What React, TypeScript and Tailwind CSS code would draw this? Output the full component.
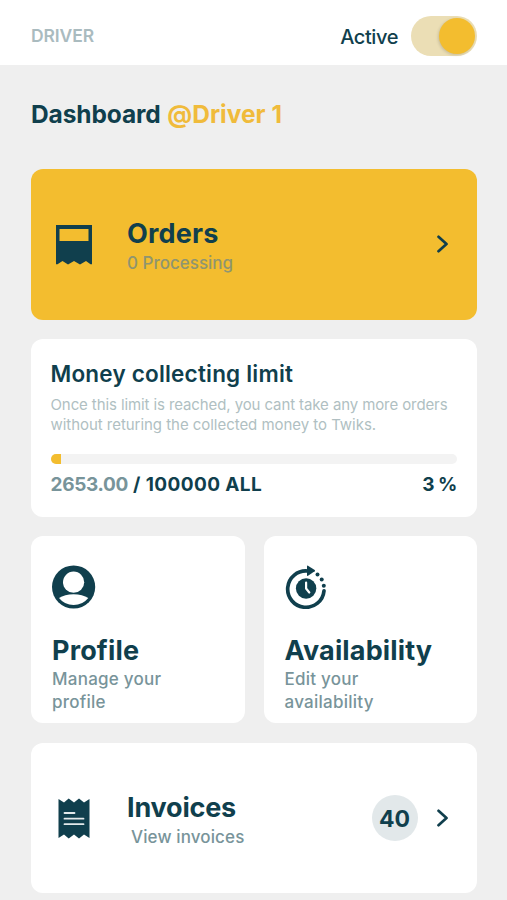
import type { ReactNode } from "react";

function OrdersIcon() {
  return (
    <svg width="36" height="40" viewBox="0 0 36 40" className="block" fill="#103f4d">
      <path
        fillRule="evenodd"
        d="M0 0H36V39.2L34.5 39.2L30 36L24 39.4L18 36L12 39.4L6.5 36L1.5 39.2H0ZM3.5 4V16H32.5V4Z"
      />
    </svg>
  );
}

function InvoiceIcon() {
  return (
    <svg width="32" height="41" viewBox="0 0 32 41" className="block">
      <path
        fill="#103f4d"
        d="M.5 1L6 4.5L10.7.5L16 4.5L21 .5L26 4.5L31.5 1V40L26 36.5L21 40.5L16 36.5L10.7 40.5L6 36.5L.5 40Z"
      />
      <path d="M6.5 15H16.5M6.5 20.7H25.5M6.5 26.2H25.5" stroke="#e3eaeb" strokeWidth="1.8" strokeLinecap="round" />
    </svg>
  );
}

function ProfileIcon() {
  return (
    <svg width="44" height="44" viewBox="0 0 44 44" className="block">
      <circle cx="21.6" cy="22" r="21.6" fill="#103f4d" />
      <circle cx="21.6" cy="17.2" r="10.6" fill="#fff" />
      <path d="M7 33Q12.6 29.2 21.6 29.2T36.3 33Q30.6 40 21.6 40T7 33Z" fill="#fff" />
    </svg>
  );
}

function AvailabilityIcon() {
  return (
    <svg width="42" height="44" viewBox="0 0 42 44" className="block">
      <path d="M39 25.8A18.2 18.2 0 1 1 22.6 6" fill="none" stroke="#103f4d" strokeWidth="3.7" strokeLinecap="round" />
      <path d="M22 1.2Q22 .2 23 .7L29.7 5.1Q30.5 5.7 29.7 6.3L23 10.8Q22 11.3 22 10.3Z" fill="#103f4d" />
      <circle cx="32.5" cy="9.6" r="2" fill="#103f4d" />
      <circle cx="36.7" cy="14.6" r="2" fill="#103f4d" />
      <circle cx="38.8" cy="20.8" r="2" fill="#103f4d" />
      <circle cx="21.1" cy="23.5" r="10.2" fill="#103f4d" />
      <path d="M21.1 17.5V23.5L24.3 27.5" fill="none" stroke="#fff" strokeWidth="2.2" strokeLinecap="round" strokeLinejoin="round" />
    </svg>
  );
}

function Chevron() {
  return (
    <svg width="12" height="18" viewBox="0 0 12 18" className="block shrink-0">
      <path d="M1.5 1.8L9.5 9L1.5 16.2" fill="none" stroke="#103f4d" strokeWidth="2.7" strokeLinecap="round" strokeLinejoin="round" />
    </svg>
  );
}

interface TileProps {
  icon: ReactNode;
  title: ReactNode;
  text: ReactNode;
}

function Tile({ icon, title, text }: TileProps) {
  return (
    <div className="h-[187px] rounded-xl bg-white pl-[21px] pt-[29px]">
      {icon}
      <h2 className="mt-[24px] text-[27px] leading-[36px] font-bold tracking-[0.15px]">{title}</h2>
      <p className="-mt-px text-[17px] leading-[23px] font-medium tracking-[0.25px] text-[#78949a]">{text}</p>
    </div>
  );
}

const collected = 2653;
const limit = 100000;

export default function App() {
  const percent = Math.round((collected / limit) * 100);

  return (
    <div className="h-[900px] w-full overflow-hidden bg-[#efefef] font-['Inter',sans-serif] text-[#103f4d] whitespace-nowrap">
      <header className="flex h-[65px] items-center justify-between bg-white pl-[31px] pr-[30px] pt-[7px]">
        <span className="pt-px text-[17.5px] font-semibold tracking-[-0.1px] text-[#aabbbf]">DRIVER</span>
        <div className="flex items-center gap-[13px]">
          <span className="pt-[2px] text-[20px] font-medium tracking-[-0.4px]">Active</span>
          <div className="flex h-10 w-[66px] items-center justify-end rounded-full bg-[#ebdeb5] pr-[2px]">
            <div className="size-9 rounded-full bg-[#f3bd2f] shadow-[-1px_1px_3px_rgba(0,0,0,0.15)]" />
          </div>
        </div>
      </header>

      <main className="px-[31px] pt-[32px] pr-[30px]">
        <h1 className="text-[24.5px] leading-[34px] font-bold tracking-[-0.12px]">
          Dashboard <span className="ml-px tracking-[0.02px] text-[#f0bb3b]">@Driver 1</span>
        </h1>

        <section className="mt-[38px] flex h-[151px] items-center rounded-xl bg-[#f3bd2f] pl-[25px] pr-[28px]">
          <OrdersIcon />
          <div className="ml-[35px] flex-1 pt-[2px]">
            <h2 className="text-[27px] leading-[34px] font-bold tracking-[0.2px]">Orders</h2>
            <p className="text-[17px] leading-[24px] font-medium text-[#8f9570]">0 Processing</p>
          </div>
          <div className="pb-px">
            <Chevron />
          </div>
        </section>

        <section className="mt-[19px] h-[178px] rounded-xl bg-white pr-5 pl-[19.5px] pt-[20px]">
          <h2 className="text-[22.5px] leading-[30px] font-semibold tracking-[0.2px]">Money collecting limit</h2>
          <p className="mt-[6px] text-[15px] leading-5 tracking-[-0.1px] text-[#b0bfc2]">
            Once this limit is reached, you cant take any more orders
            <br />
            <span className="tracking-[-0.04px]">without returing the collected money to Twiks.</span>
          </p>
          <div className="mt-[19px] h-[10px] overflow-hidden rounded-full bg-[#f3f3f3]">
            <div className="h-full bg-[#f3bd2f]" style={{ width: `${percent - 0.3}%` }} />
          </div>
          <div className="mt-[7px] flex justify-between text-[19px] leading-[28px] font-bold">
            <span className="tracking-[0.4px]">
              <span className="tracking-[-0.3px] text-[#78949a]">{collected.toFixed(2)}</span> / {limit} ALL
            </span>
            <span className="tracking-[-0.4px]">{percent} %</span>
          </div>
        </section>

        <div className="mt-[19px] grid grid-cols-2 gap-[19px]">
          <Tile icon={<ProfileIcon />} title="Profile" text={<>Manage your<br />profile</>} />
          <Tile icon={<AvailabilityIcon />} title="Availability" text={<>Edit your<br />availability</>} />
        </div>

        <section className="mt-5 flex h-[150px] items-center rounded-xl bg-white pl-[27px] pr-[28px]">
          <InvoiceIcon />
          <div className="ml-[37px] flex-1 pt-[4px]">
            <h2 className="text-[27px] leading-[34px] font-bold tracking-[-0.2px]">Invoices</h2>
            <p className="pl-1 text-[17px] leading-[24px] font-medium tracking-[0.12px] text-[#78949a]">View invoices</p>
          </div>
          <span className="mr-[19px] flex size-[46px] items-center justify-center rounded-full bg-[#e2e8ea] pt-[2px] pr-px text-[23px] font-bold">40</span>
          <Chevron />
        </section>
      </main>
    </div>
  );
}
